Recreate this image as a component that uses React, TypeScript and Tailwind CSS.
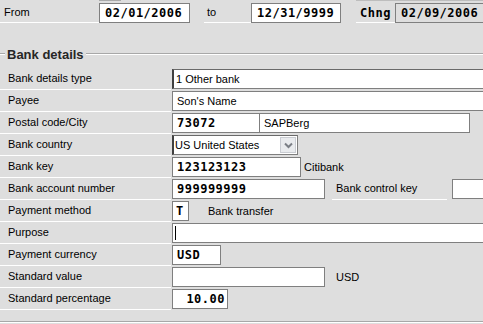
import React from "react";

const sans = "font-['Liberation_Sans',Arial,sans-serif]";
const mono = "font-['DejaVu_Sans_Mono','Liberation_Mono',monospace] font-bold text-[12px] tracking-[0.5px] whitespace-nowrap";

function Label({ children }: { children: React.ReactNode }) {
  return (
    <div className="w-[171px] h-[22px] shrink-0 border-b border-white pl-[8px] flex items-center text-[11px] text-black whitespace-nowrap">
      {children}
    </div>
  );
}

function Row({ children, label }: { children?: React.ReactNode; label: string }) {
  return (
    <div className="flex h-[22px] items-start">
      <Label>{label}</Label>
      <div className="flex items-start shrink-0 ml-[1px] mt-[1px] h-[20px]">{children}</div>
    </div>
  );
}

export default function App() {
  return (
    <div className={`w-[483px] h-[324px] bg-[#dedede] overflow-hidden ${sans}`}>
      {/* Top validity row */}
      <div className="flex h-[25px] items-start">
        <div className="w-[99px] shrink-0 h-[23px] border-b border-white pl-[4px] pt-[3px] flex items-center text-[11px] text-black">
          From
        </div>
        <div className="relative shrink-0 w-[91px] h-[20px] mt-[3px] bg-white border border-[#7f7f7f] flex items-center pl-[5px]">
          <div className="absolute -top-[4px] -left-px w-[22px] h-[1px] bg-[#a9a9a9]" />
          <span className={mono}>02/01/2006</span>
        </div>
        <div className="w-[47px] shrink-0 h-[23px] ml-[14px] border-b border-white pl-[3px] pt-[3px] flex items-center text-[11px] text-black">
          to
        </div>
        <div className="w-[90px] shrink-0 h-[20px] mt-[3px] bg-white border border-[#7f7f7f] flex items-center pl-[5px]">
          <span className={mono}>12/31/9999</span>
        </div>
        <div className="flex items-start shrink-0 ml-[15px] border-t border-[#bdbdbd] w-[130px]">
          <div className="w-[39px] shrink-0 h-[22px] border-b border-white pl-[4px] pt-[2px] flex items-center">
            <span className={mono}>Chng</span>
          </div>
          <div className="w-[100px] shrink-0 h-[20px] mt-[2px] bg-[#dedede] border border-[#7f7f7f] flex items-center pl-[5px]">
            <span className={mono}>02/09/2006</span>
          </div>
        </div>
      </div>

      {/* Group header */}
      <div className="flex items-center h-[14px] mt-[22px]">
        <div className="w-[5px] shrink-0 h-[2px] border-t border-[#a8a8a8] border-b border-b-white" />
        <div className="px-[2px] shrink-0 text-[13px] font-bold text-[#262626] leading-none whitespace-nowrap">Bank details</div>
        <div className="flex-1 h-[2px] border-t border-[#a8a8a8] border-b border-b-white" />
      </div>

      {/* Rows */}
      <div className="mt-[7px] flex flex-col text-[11px] text-black">
        <Row label="Bank details type">
          <div className="w-[320px] shrink-0 h-[20px] bg-white border border-[#7f7f7f] border-l-2 border-l-[#404040] border-t-[#6a6a6a] flex items-center pl-[2px] whitespace-nowrap">
            1 Other bank
          </div>
        </Row>
        <Row label="Payee">
          <div className="w-[320px] shrink-0 h-[20px] bg-white border border-[#7f7f7f] flex items-center pl-[4px] whitespace-nowrap">
            Son's Name
          </div>
        </Row>
        <Row label="Postal code/City">
          <div className="w-[88px] shrink-0 h-[20px] bg-white border border-[#7f7f7f] flex items-center pl-[4px]">
            <span className={mono}>73072</span>
          </div>
          <div className="w-[211px] shrink-0 h-[20px] -ml-px bg-white border border-[#7f7f7f] flex items-center pl-[4px]">
            SAPBerg
          </div>
        </Row>
        <Row label="Bank country">
          <div className="w-[126px] shrink-0 h-[20px] bg-white border border-[#7f7f7f] border-l-2 border-l-[#404040] border-t-[#6a6a6a] flex items-stretch">
            <div className="flex-1 flex items-center pl-[1px] whitespace-nowrap">US United States</div>
            <div className="w-[16px] shrink-0 my-[1px] mr-[1px] bg-[#e9ebee] border border-[#c9ccd2] flex items-center justify-center">
              <svg width="9" height="7" viewBox="0 0 9 7">
                <path d="M1 1.5 L4.5 5 L8 1.5" fill="none" stroke="#7b7f86" strokeWidth="2" />
              </svg>
            </div>
          </div>
        </Row>
        <Row label="Bank key">
          <div className="w-[129px] shrink-0 h-[20px] bg-white border border-[#7f7f7f] flex items-center pl-[4px]">
            <span className={mono}>123123123</span>
          </div>
          <div className="h-[20px] ml-[3px] flex items-center">Citibank</div>
        </Row>
        <div className="flex h-[22px] items-start">
          <Label>Bank account number</Label>
          <div className="w-[153px] shrink-0 h-[20px] ml-[1px] mt-[1px] bg-white border border-[#7f7f7f] flex items-center pl-[4px]">
            <span className={mono}>999999999</span>
          </div>
          <div className="w-[115px] shrink-0 h-[22px] ml-[7px] border-b border-white pl-[4px] flex items-center whitespace-nowrap">
            Bank control key
          </div>
          <div className="w-[60px] shrink-0 h-[20px] ml-[5px] mt-[1px] bg-white border border-[#7f7f7f]" />
        </div>
        <Row label="Payment method">
          <div className="w-[17px] shrink-0 h-[20px] bg-white border border-[#7f7f7f] flex items-center pl-[3px]">
            <span className={mono}>T</span>
          </div>
          <div className="h-[20px] ml-[19px] flex items-center whitespace-nowrap">Bank transfer</div>
        </Row>
        <Row label="Purpose">
          <div className="w-[320px] shrink-0 h-[20px] bg-white border border-[#7f7f7f] flex items-center pl-[2px]">
            <div className="w-px h-[14px] bg-black" />
          </div>
        </Row>
        <Row label="Payment currency">
          <div className="w-[49px] shrink-0 h-[20px] bg-white border border-[#7f7f7f] flex items-center pl-[4px]">
            <span className={mono}>USD</span>
          </div>
        </Row>
        <Row label="Standard value">
          <div className="w-[153px] shrink-0 h-[20px] bg-white border border-[#7f7f7f]" />
          <div className="h-[20px] ml-[11px] flex items-center">USD</div>
        </Row>
        <Row label="Standard percentage">
          <div className="w-[56px] shrink-0 h-[20px] bg-white border border-[#7f7f7f] flex items-center justify-end pr-[2px]">
            <span className={mono}>10.00</span>
          </div>
        </Row>
      </div>

      <div className="mt-[11px] h-[2px] border-t border-[#a8a8a8] border-b border-b-white" />
    </div>
  );
}
